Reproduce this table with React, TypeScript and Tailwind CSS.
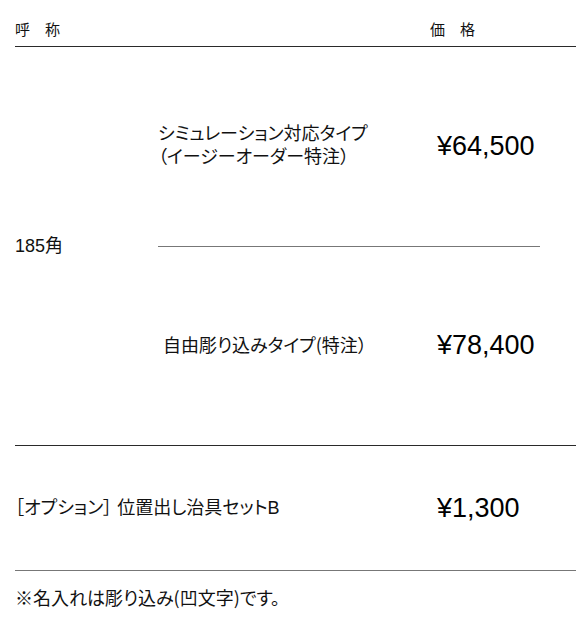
import React from 'react';

const font = "font-['Liberation_Sans','Noto_Sans_CJK_JP',sans-serif] [font-feature-settings:'palt']";

function Price({ value }: { value: string }) {
  return <span className="text-[27px] leading-none text-black font-['Liberation_Sans',sans-serif]">{value}</span>;
}

// 半角カッコは和文フォントで出す
function Jp({ children }: { children: React.ReactNode }) {
  return <span className="font-['Noto_Sans_CJK_JP',sans-serif]">{children}</span>;
}

export default function App() {
  return (
    <div className={`w-[576px] h-[618px] bg-white pl-[15px] text-[#111] ${font}`}>
      {/* 見出し */}
      <div className="flex pt-5 pb-[6px] border-b border-[#2a2a2a] text-[15px] leading-5">
        <span className="w-[415px] [font-feature-settings:normal]">呼　称</span>
        <span className="[font-feature-settings:normal]">価　格</span>
      </div>

      <div className="flex h-[399px] border-b border-[#2a2a2a]">
        <div className="w-[143px] flex items-center text-[18px]">185角</div>
        <div className="w-[382px] flex flex-col">
          <div className="flex-1 flex items-center border-b border-[#777]">
            <div className="w-[279px] text-[18px] leading-[23px]">
              シミュレーション対応タイプ
              <br />
              （イージーオーダー特注）
            </div>
            <Price value="¥64,500" />
          </div>
          <div className="flex-1 flex items-center">
            <div className="w-[279px] pl-[5px] text-[18px]">
              自由彫り込みタイプ<Jp>(</Jp>特注）
            </div>
            <Price value="¥78,400" />
          </div>
        </div>
      </div>

      <div className="flex items-center h-[125px] border-b border-[#777]">
        <div className="w-[422px] text-[18px]">［オプション］ 位置出し治具セットB</div>
        <Price value="¥1,300" />
      </div>

      <p className="pt-[14px] text-[18px] leading-6">
        ※名入れは彫り込み<Jp>(</Jp>凹文字<Jp>)</Jp>です。
      </p>
    </div>
  );
}
